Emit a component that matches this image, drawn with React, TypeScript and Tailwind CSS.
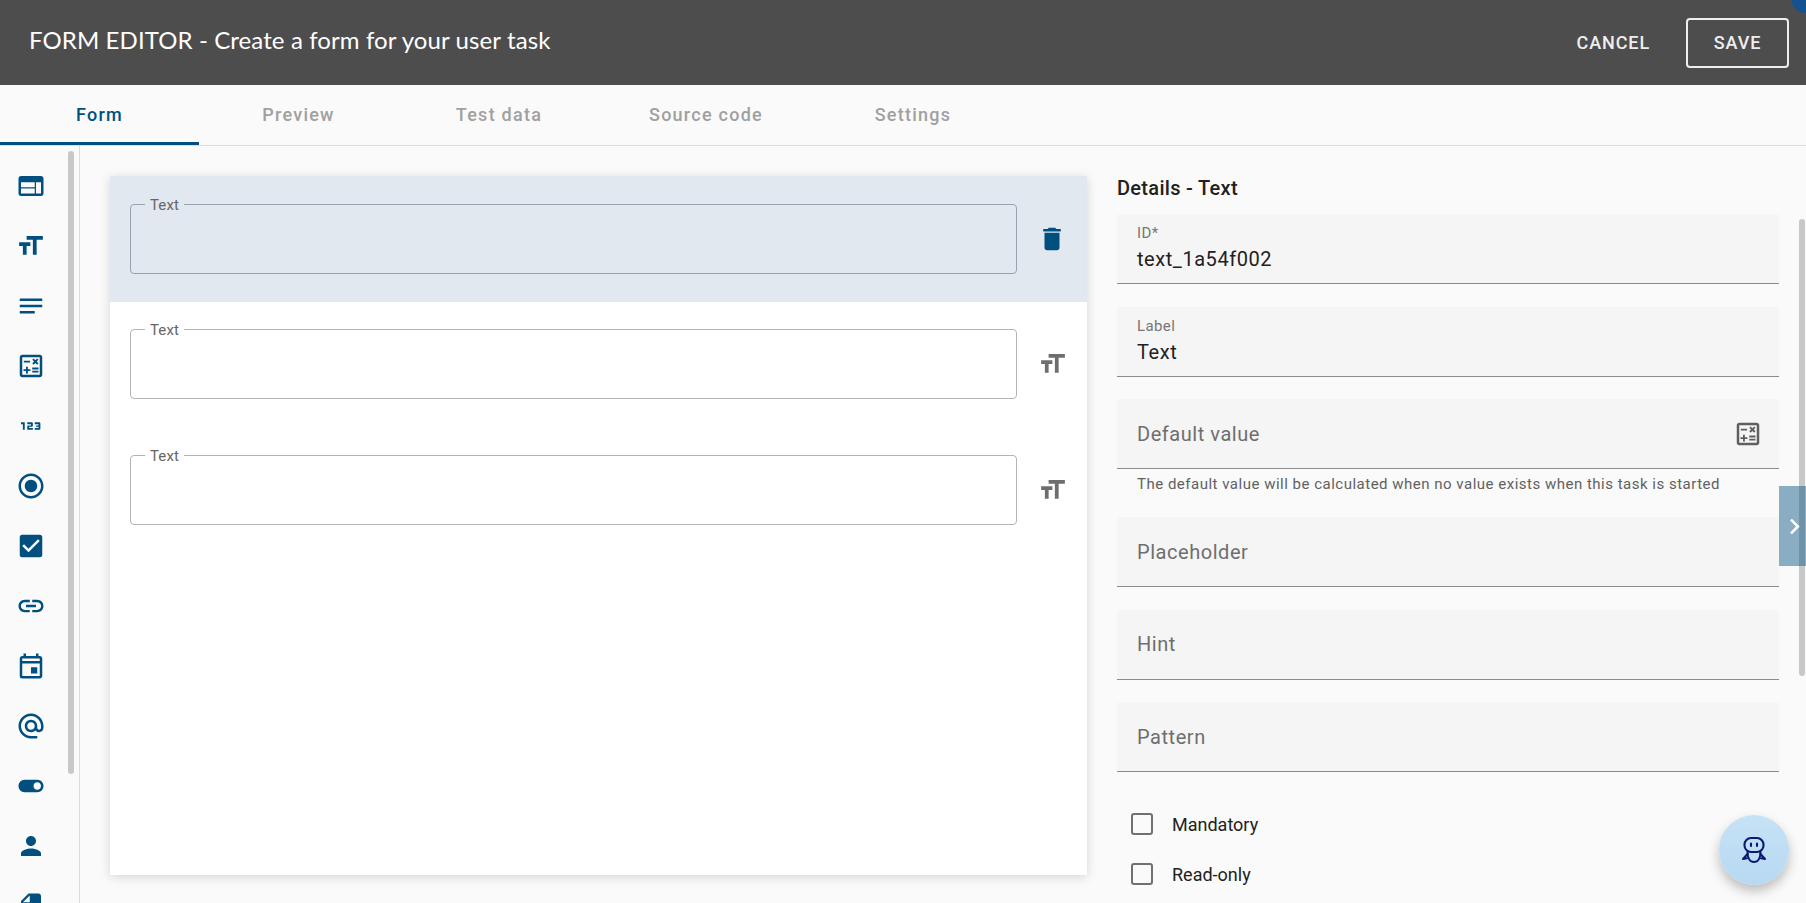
import {
  Md123,
  MdAlternateEmail,
  MdCheckBox,
  MdChevronRight,
  MdDelete,
  MdInsertDriveFile,
  MdLink,
  MdNotes,
  MdOutlineCalculate,
  MdOutlineEvent,
  MdPerson,
  MdRadioButtonChecked,
  MdTextFields,
  MdToggleOn,
  MdWeb,
} from "react-icons/md";

const tabs = [
  { name: "Form", width: "w-[199px]" },
  { name: "Preview", width: "w-[199px]" },
  { name: "Test data", width: "w-[202px]" },
  { name: "Source code", width: "w-[212px]" },
  { name: "Settings", width: "w-[202px]" },
];

const TextIcon = ({ className }: { className: string }) => (
  <MdTextFields className={`-scale-x-100 ${className}`} />
);

const FileIcon = ({ className }: { className: string }) => (
  <MdInsertDriveFile className={`-scale-x-100 ${className}`} />
);

const sideIcons = [
  MdWeb,
  TextIcon,
  MdNotes,
  MdOutlineCalculate,
  Md123,
  MdRadioButtonChecked,
  MdCheckBox,
  MdLink,
  MdOutlineEvent,
  MdAlternateEmail,
  MdToggleOn,
  MdPerson,
  FileIcon,
];

const OutlinedField = ({ selected }: { selected?: boolean }) => (
  <div
    className={`relative h-[70px] flex-1 rounded border ${
      selected ? "border-[#9aa2ab]" : "border-[#b3b3b3]"
    }`}
  >
    <span
      className={`absolute left-[14px] top-[-9px] px-[5px] text-[15px] leading-[18px] tracking-[0.1px] text-[#666666] ${
        selected ? "bg-[#e1e8f0]" : "bg-white"
      }`}
    >
      Text
    </span>
  </div>
);

const FilledField = ({
  label,
  value,
  icon,
}: {
  label: string;
  value?: string;
  icon?: boolean;
}) => (
  <div className="flex h-[70px] items-center justify-between rounded-t border-b border-[#8c8c8c] bg-[#f5f5f5] pl-5 pr-4">
    {value ? (
      <div className="flex flex-col pb-[1px]">
        <span className="text-[15px] leading-[18px] tracking-[0.4px] text-[#757575]">{label}</span>
        <span className="mt-[4px] text-[20px] leading-[26px] tracking-[0.55px] text-[#212121]">{value}</span>
      </div>
    ) : (
      <span className="text-[20px] leading-[26px] tracking-[0.55px] text-[#6e6e6e]">{label}</span>
    )}
    {icon && <MdOutlineCalculate className="h-[30px] w-[30px] text-[#5f5f5f]" />}
  </div>
);

const Check = ({ label }: { label: string }) => (
  <label className="flex h-[50px] items-center pl-[14px]">
    <span className="h-[22px] w-[22px] rounded-[3px] border-2 border-[#707070]" />
    <span className="ml-[19px] text-[18px] text-[#212121]">{label}</span>
  </label>
);

const BotIcon = () => (
  <svg viewBox="0 0 28 28" className="h-[28px] w-[28px]" fill="none" stroke="#0b1a70" strokeWidth="2.1" strokeLinecap="round" strokeLinejoin="round">
    <rect x="4.5" y="2" width="19" height="14" rx="6.5" />
    <path d="M11 7.5v2.5M17 7.5v2.5" />
    <path d="M7.5 16c0 6 2.5 10 6.5 10s6.5-4 6.5-10" />
    <path d="M7.5 18l-4.5 5 4-.8M20.5 18l4.5 5-4-.8" />
  </svg>
);

export default function App() {
  return (
    <div className="relative flex h-[903px] w-full flex-col overflow-hidden bg-[#fafafa] font-['Roboto',sans-serif]">
      <header className="flex h-[85px] shrink-0 items-center justify-between bg-[#4d4d4d] pl-[29px] pr-[17px]">
        <h1 className="pb-[6px] font-['Lato',sans-serif] text-[24px] font-normal tracking-[0.1px] text-white">
          FORM EDITOR - Create a form for your user task
        </h1>
        <div className="flex items-center">
          <button className="mr-[36px] text-[18px] font-medium tracking-[0.9px] text-[#eeeeee]">CANCEL</button>
          <button className="h-[50px] w-[103px] rounded border-2 border-[#eeeeee] text-[18px] font-medium tracking-[0.9px] text-[#eeeeee]">
            SAVE
          </button>
        </div>
      </header>

      <nav className="flex h-[61px] shrink-0 border-b border-[#dcdcdc]">
        {tabs.map((tab, i) => (
          <div
            key={tab.name}
            className={`flex h-[60px] items-center justify-center border-b-[3px] pt-[1px] text-[18px] font-medium tracking-[1.25px] ${tab.width} ${
              i === 0 ? "border-[#004f7f] text-[#004f7f]" : "border-transparent text-[#a0a0a0]"
            }`}
          >
            {tab.name}
          </div>
        ))}
      </nav>

      <div className="flex min-h-0 flex-1">
        <aside className="relative w-[80px] shrink-0 overflow-hidden border-r border-[#dcdcdc] pl-4 pt-[10px]">
          {sideIcons.map((Icon, i) => (
            <div key={i} className="flex h-[60px] items-center">
              <Icon className="h-[30px] w-[30px] text-[#004f7f]" />
            </div>
          ))}
          <div className="absolute left-[68px] top-[5px] h-[623px] w-[6px] rounded-full bg-[#c8c8c8]" />
        </aside>

        <main className="flex flex-1 pl-[30px] pt-[30px]">
          <section className="h-[699px] w-[977px] shrink-0 bg-white shadow-[0_2px_10px_rgba(0,0,0,0.15)]">
            <div className="flex h-[126px] items-center gap-[20px] bg-[#e1e8f0] pl-5 pr-[20px]">
              <OutlinedField selected />
              <MdDelete className="h-[30px] w-[30px] text-[#004f7f]" />
            </div>
            {[0, 1].map((n) => (
              <div key={n} className="flex h-[126px] items-center gap-[21px] pb-[2px] pl-5 pr-[19px]">
                <OutlinedField />
                <TextIcon className="h-[30px] w-[30px] text-[#6e6e6e]" />
              </div>
            ))}
          </section>

          <section className="ml-[30px] w-[662px] shrink-0">
            <h2 className="mb-[14px] text-[20px] font-medium leading-6 tracking-[0.3px] text-[#212121]">Details - Text</h2>
            <div className="flex flex-col gap-[22.5px]">
              <FilledField label="ID*" value="text_1a54f002" />
              <FilledField label="Label" value="Text" />
              <div>
                <FilledField label="Default value" icon />
                <p className="h-[25.5px] pl-5 pt-[6px] text-[15px] leading-[18px] tracking-[0.5px] text-[#616161]">
                  The default value will be calculated when no value exists when this task is started
                </p>
              </div>
              <FilledField label="Placeholder" />
              <FilledField label="Hint" />
              <FilledField label="Pattern" />
            </div>
            <div className="mt-[27px]">
              <Check label="Mandatory" />
              <Check label="Read-only" />
            </div>
          </section>
        </main>
      </div>

      <div className="absolute right-[-16px] top-[-18px] h-[31px] w-[31px] rounded-full bg-[#11528f]" />
      <div className="absolute right-[1.5px] top-[219px] h-[457px] w-[6px] rounded-full bg-[#c8c8c8]" />
      <div className="absolute right-0 top-[486px] flex h-[80px] w-[27px] items-center justify-center bg-[#00507f]/45 pl-1">
        <MdChevronRight className="h-[31px] w-[31px] shrink-0 text-white" />
      </div>
      <div className="absolute right-[17px] top-[815px] flex h-[70px] w-[70px] items-center justify-center rounded-full bg-gradient-to-b from-[#c6e2f6] to-[#b7d9f2] shadow-[0_6px_12px_rgba(0,0,0,0.25)]">
        <BotIcon />
      </div>
    </div>
  );
}
